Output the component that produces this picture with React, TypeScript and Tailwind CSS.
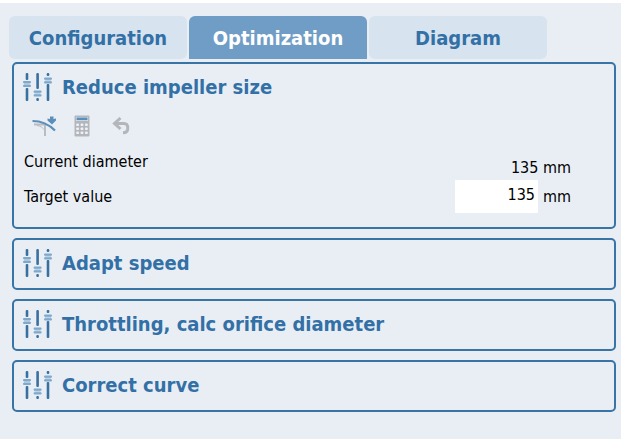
import { useState } from "react";

const TABS = ["Configuration", "Optimization", "Diagram"];

const OTHER_SECTIONS = [
  "Adapt speed",
  "Throttling, calc orifice diameter",
  "Correct curve",
];

function SlidersIcon() {
  return (
    <svg width="30" height="30" viewBox="0 0 30 30" className="shrink-0" aria-hidden="true">
      <g fill="#3a70a0">
        <rect x="2.700" y="1" width="2.600" height="7" rx="1" />
        <rect x="2.700" y="16" width="2.600" height="13" rx="1" />
        <rect x="13.300" y="1" width="2.600" height="16" rx="1" />
        <rect x="13.300" y="26" width="2.600" height="3" rx="1" />
        <rect x="23.700" y="1" width="2.600" height="3" rx="1" />
        <rect x="23.700" y="12" width="2.600" height="17" rx="1" />
      </g>
      <g fill="#bcd5e8">
        <rect x="1" y="9" width="6" height="5" />
        <rect x="11.500" y="19" width="6" height="5" />
        <rect x="22" y="6" width="6" height="5" />
      </g>
      <g fill="#7fa8ca">
        <rect x="0" y="9" width="8" height="2.300" rx="1" />
        <rect x="0" y="12.700" width="8" height="2.300" rx="1" />
        <rect x="10.600" y="18.500" width="8" height="2.300" rx="1" />
        <rect x="10.600" y="22.200" width="8" height="2.300" rx="1" />
        <rect x="21" y="5.500" width="8" height="2.300" rx="1" />
        <rect x="21" y="9.200" width="8" height="2.300" rx="1" />
      </g>
    </svg>
  );
}

function CurveIcon() {
  return (
    <svg width="24" height="22" viewBox="0 0 24 22" fill="none" aria-hidden="true">
      <path d="M2 9.500H13V21" stroke="#b9bcc0" strokeWidth="2" />
      <path d="M5 10.500C9 11 11 13 12.500 15" stroke="#b9bcc0" strokeWidth="1" />
      <path d="M0.500 6C9 6 16 8.500 23 15.500" stroke="#5b8fba" strokeWidth="2.200" />
      <path d="M18 1.500H21.500V4L24 3.500V5.500L20 9.500L15.500 5.500V3.500L18 4Z" fill="#5b8fba" />
    </svg>
  );
}

function CalculatorIcon() {
  return (
    <svg width="16" height="22" viewBox="0 0 16 22" aria-hidden="true">
      <rect x="0.500" y="0.500" width="15" height="21" rx="1" fill="#b3b7bc" />
      <rect x="2" y="2" width="12" height="4" fill="#dfe9f2" />
      <rect x="2.500" y="2.500" width="11" height="2.700" fill="#5b8fba" />
      {[8.5, 12.5, 16.5].map(y =>
        [2.3, 6.7, 11.1].map(x => (
          <rect key={`${x}-${y}`} x={x} y={y} width="2.600" height="2.600" rx="0.7" fill="#eef2f6" />
        ))
      )}
    </svg>
  );
}

function UndoIcon() {
  return (
    <svg width="18" height="18" viewBox="0 0 18 18" fill="none" stroke="#b3b7bc" strokeWidth="3" aria-hidden="true">
      <path d="M8.500 1L2.500 6.500L8.500 12" />
      <path d="M3 6.500H12C15 6.500 15.800 8.500 15.800 11C15.800 14 14.500 15.800 11 15.800" />
    </svg>
  );
}

function SectionHeader({ title, open }: { title: string; open: boolean }) {
  return (
    <h2>
      <button
        aria-expanded={open}
        className="flex h-12 w-full items-center gap-[9px] pb-0.5 pl-[9px] text-left text-[20px] leading-6 font-bold text-[#3270a6]"
      >
        <SlidersIcon />
        {title}
      </button>
    </h2>
  );
}

export default function App() {
  const [tab, setTab]       = useState("Optimization");
  const [target, setTarget] = useState("135");

  return (
    <div className="min-h-screen border-t-3 border-white bg-[#e9eef5] pt-[13px] font-['DejaVu_Sans_Condensed','Noto_Sans',sans-serif]">
      {/* Tabs */}
      <div role="tablist" className="flex gap-0.5 pl-[9px]">
        {TABS.map(t => (
          <button
            key={t}
            role="tab"
            aria-selected={t === tab}
            onClick={() => setTab(t)}
            className={`h-[43px] w-[178px] rounded-md text-[20px] leading-6 font-bold ${
              t === tab ? "rounded-b-none bg-[#6f9dc5] text-white" : "bg-[#d7e3ee] text-[#3270a6]"
            }`}
          >
            {t}
          </button>
        ))}
      </div>

      <main className="mt-[3px] flex flex-col gap-[9px] pr-[5px] pl-3">
        <section className="rounded-[5px] border-2 border-[#3874a6] pb-3.5">
          <SectionHeader title="Reduce impeller size" open />

          {/* Toolbar */}
          <div className="flex h-8 items-center gap-[18px] pb-1 pl-[18px]">
            <button aria-label="Trim impeller"><CurveIcon /></button>
            <button aria-label="Calculate"><CalculatorIcon /></button>
            <button aria-label="Undo" className="ml-1"><UndoIcon /></button>
          </div>

          {/* Values */}
          <div className="pr-[43px] pl-2.5 text-[16px] leading-6 text-black">
            <div className="flex h-9 justify-between">
              <span className="self-center">Current diameter</span>
              <span className="self-end">135 mm</span>
            </div>
            <div className="flex items-center">
              <label htmlFor="target" className="flex-1">Target value</label>
              <input
                id="target"
                value={target}
                onChange={e => setTarget(e.target.value)}
                className="mr-[5px] h-[33px] w-[83px] bg-white pr-[3px] pb-1 text-right"
              />
              <span>mm</span>
            </div>
          </div>
        </section>

        {OTHER_SECTIONS.map(title => (
          <section key={title} className="rounded-[5px] border-2 border-[#3874a6]">
            <SectionHeader title={title} open={false} />
          </section>
        ))}
      </main>
    </div>
  );
}
